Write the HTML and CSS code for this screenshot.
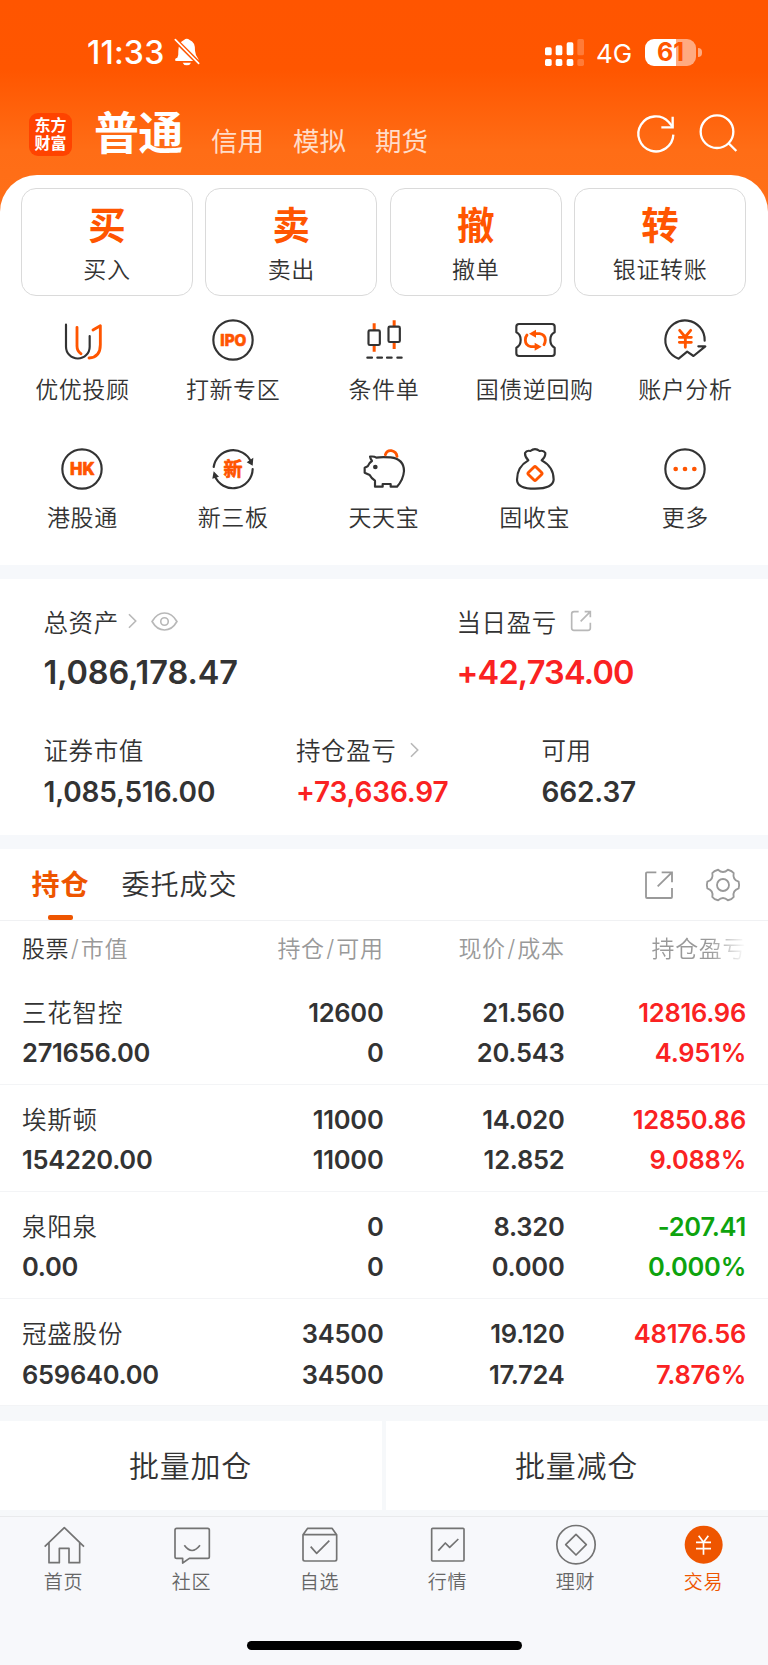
FILE: index.html
```html
<!DOCTYPE html>
<html lang="zh-CN">
<head>
<meta charset="utf-8">
<title>交易</title>
<link rel="stylesheet" href="styles.css">
</head>
<body>
<div class="app">
  <header class="top">
    <div class="status">
      <span class="time">11:33</span>
      <svg class="bell" viewBox="0 0 78 84"><path d="M10 59Q3 60 3 66Q3 69 8 69H71Q76 69 73 63Q64 52 63 38Q64 12 47 6Q38-1 30 6Q14 12 13 38Q14 50 10 59z" fill="#fff"/><path d="M26 74H51Q48 82 38.500 82Q29 82 26 74z" fill="#fff"/><path d="M0 2L78 80" stroke="#ff5600" stroke-width="14"/><path d="M4 5L74 76" stroke="#fff" stroke-width="5" stroke-linecap="round"/></svg>
      <svg class="signal" viewBox="0 0 117 81" fill="#fff"><rect y="25" width="20" height="24" rx="5"/><rect x="32" y="19" width="20" height="30" rx="5"/><rect x="65" y="10" width="20" height="39" rx="5"/><rect y="60" width="20" height="21" rx="5"/><rect x="32" y="60" width="20" height="21" rx="5"/><rect x="65" y="60" width="20" height="21" rx="5"/><g opacity=".22"><rect x="97" width="20" height="49" rx="5"/><rect x="97" y="60" width="20" height="21" rx="5"/></g></svg>
      <span class="net">4G</span>
      <span class="battery">61</span><i class="nub"></i>
    </div>
    <nav class="accounts">
      <div class="logo"><span>东方</span><span>财富</span></div>
      <strong class="current">普通</strong>
      <a>信用</a><a>模拟</a><a>期货</a>
      <svg class="refresh" viewBox="0 0 120 120" fill="none" stroke="#fff" stroke-width="7"><path d="M109 65A52.500 52.500 0 1 1 95 27L107 41"/><path d="M107 11V43H73"/></svg>
      <svg class="search" viewBox="0 0 120 120" fill="none" stroke="#fff" stroke-width="7"><circle cx="54" cy="56" r="49"/><path d="M88 90L112 114"/></svg>
    </nav>
  </header>

  <main>
    <section class="sheet">
      <div class="quick">
        <a class="card"><b>买</b><span>买入</span></a>
        <a class="card"><b>卖</b><span>卖出</span></a>
        <a class="card"><b>撤</b><span>撤单</span></a>
        <a class="card"><b>转</b><span>银证转账</span></a>
      </div>
      <div class="tools">
        <a class="tool"><svg viewBox="0 0 132 132"><path d="M18 20V86a35.500 35.500 0 0 0 71 0V54"/><path class="o" d="M51 28V84Q51 100 63 107M99 36L121 23V80Q121 118 87 120"/></svg><span>优优投顾</span></a>
        <a class="tool"><svg viewBox="0 0 132 132"><circle cx="66" cy="66" r="59"/><text x="67" y="84" font-size="49" textLength="78" lengthAdjust="spacingAndGlyphs">IPO</text></svg><span>打新专区</span></a>
        <a class="tool"><svg viewBox="0 0 132 132"><path class="o butt" d="M36.500 16V36M36.500 82V101M96.500 7V25M96.500 73V93"/><rect x="19.500" y="37" width="34" height="44" rx="4"/><rect x="79.500" y="26" width="34" height="46" rx="4"/><path d="M16 119H30M46 119H60M75 119H89M106 119H119"/></svg><span>条件单</span></a>
        <a class="tool"><svg viewBox="0 0 132 132"><path d="M18 18H117q8 0 8 8v17q-13 6-13 23t13 23v17q0 8-8 8H18q-8 0-8-8V89q13-6 13-23t-13-23V26q0-8 8-8z"/><path class="o" d="M62 47H80Q97 50 97 66Q97 74 93 80M73 86H54Q37 83 37 66Q37 57 42 51"/><path class="fo" d="M48 47L69 35V59zM86 86L65 74V98z"/></svg><span>国债逆回购</span></a>
        <a class="tool"><svg viewBox="0 0 132 132"><path d="M125 68A59 59 0 1 0 47 122L72.500 101L91.500 114L127 85H106"/><path class="o" d="M50 37L66.500 57L83 37M49 58H85M49 73H85M67 58V88"/></svg><span>账户分析</span></a>
        <a class="tool"><svg viewBox="0 0 132 132"><circle cx="66" cy="66" r="59"/><text x="67" y="84" font-size="50" textLength="74" lengthAdjust="spacingAndGlyphs">HK</text></svg><span>港股通</span></a>
        <a class="tool"><svg viewBox="0 0 132 132"><path d="M8 60A59 59 0 0 1 120 44M125 66A59 59 0 0 1 11 86"/><path class="fd" d="M107 46L127 32L125 56zM4 95L8 73L24 89z"/><text class="cn" x="66" y="86" font-size="57">新</text></svg><span>新三板</span></a>
        <a class="tool"><svg viewBox="0 0 132 132"><path d="M24 29Q36 27 43 32Q55 29 86 31Q126 36 126 72Q124 98 105 119H86V111H62V119H39V101Q28 94 23 84L8 77V62L17 58Q21 47 30 42Q25 35 24 29z"/><circle class="fd" cx="40" cy="60" r="7"/><path class="o" d="M70 23Q75 9 88 11Q103 14 105 28"/></svg><span>天天宝</span></a>
        <a class="tool"><svg viewBox="0 0 132 132"><path d="M46 40Q35 29 36 18Q41 9 52 12Q66 1 80 12Q92 9 97 18Q98 29 86 40Q122 59 122 98Q120 125 66 125Q12 125 12 98Q12 59 46 40z"/><rect class="o" x="50" y="63.500" width="32" height="32" rx="4" transform="rotate(45 66 79.500)"/></svg><span>固收宝</span></a>
        <a class="tool"><svg viewBox="0 0 132 132"><circle cx="66" cy="66" r="59"/><g class="fo"><circle cx="38" cy="66" r="7"/><circle cx="66" cy="66" r="7"/><circle cx="94" cy="66" r="7"/></g></svg><span>更多</span></a>
      </div>
    </section>

    <section class="assets">
      <div class="row main-row">
        <div class="item"><h3>总资产<svg class="chev" viewBox="0 0 28 48"><path d="M3 3L24 24L3 45"/></svg><svg class="eye" viewBox="0 0 82 58"><path d="M3 29Q18 3 41 3T79 29Q64 55 41 55T3 29z"/><circle cx="41" cy="29" r="11.500"/></svg></h3><p>1,086,178.47</p></div>
        <div class="item"><h3>当日盈亏<svg class="share-s" viewBox="0 0 66 66"><path d="M26 5H12Q5 5 5 12V54Q5 61 12 61H54Q61 61 61 54V38M32 34L61 5M44 5H61V22"/></svg></h3><p class="up">+42,734.00</p></div>
      </div>
      <div class="row sub-row">
        <div class="item"><h3>证券市值</h3><p>1,085,516.00</p></div>
        <div class="item"><h3>持仓盈亏<svg class="chev far" viewBox="0 0 28 48"><path d="M3 3L24 24L3 45"/></svg></h3><p class="up">+73,636.97</p></div>
        <div class="item"><h3>可用</h3><p>662.37</p></div>
      </div>
    </section>

    <section class="holdings">
      <div class="tabs">
        <a class="tab on">持仓</a><a class="tab">委托成交</a>
        <svg class="act first" viewBox="0 0 96 96"><path d="M40 10H12Q9 10 9 13V84Q9 87 12 87H84Q87 87 87 84V57M44 52L86 11M56 10H87V40"/></svg>
        <svg class="act" viewBox="-51 -51 102 102"><path d="M47-10Q50 0 47 10Q28 16 32 35.700Q27 43 14.800 45.700Q0 32-14.800 45.700Q-27 43-32 35.700Q-28 16-47 10Q-50 0-47-10Q-28-16-32-35.700Q-27-43-14.800-45.700Q0-32 14.800-45.700Q27-43 32-35.700Q28-16 47-10z"/><circle r="18"/></svg>
      </div>
      <div class="grid thead"><span><em>股票</em><i>/</i>市值</span><span>持仓<i>/</i>可用</span><span>现价<i>/</i>成本</span><span class="fade">持仓盈亏</span></div>
      <div class="grid stock"><span class="name">三花智控</span><b>12600</b><b>21.560</b><b class="up">12816.96</b><b>271656.00</b><b>0</b><b>20.543</b><b class="up">4.951%</b></div>
      <div class="grid stock"><span class="name">埃斯顿</span><b>11000</b><b>14.020</b><b class="up">12850.86</b><b>154220.00</b><b>11000</b><b>12.852</b><b class="up">9.088%</b></div>
      <div class="grid stock"><span class="name">泉阳泉</span><b>0</b><b>8.320</b><b class="down">-207.41</b><b>0.00</b><b>0</b><b>0.000</b><b class="down">0.000%</b></div>
      <div class="grid stock"><span class="name">冠盛股份</span><b>34500</b><b>19.120</b><b class="up">48176.56</b><b>659640.00</b><b>34500</b><b>17.724</b><b class="up">7.876%</b></div>
    </section>

    <div class="batch"><button>批量加仓</button><button>批量减仓</button></div>
  </main>

  <footer class="bottom">
    <nav class="bar">
      <a><svg viewBox="0 0 132 132"><path d="M8 71L67 14L126 71M21 60V119H52V76H81V119H113V60"/></svg><span>首页</span></a>
      <a><svg viewBox="0 0 132 132"><path d="M20 16H113Q118 16 118 21V101Q118 106 113 106H58L38 120V106H20Q15 106 15 101V21Q15 16 20 16zM43 67Q66 98 90 67"/></svg><span>社区</span></a>
      <a><svg viewBox="0 0 132 132"><path d="M15 35L29 16H102L116 35V109Q116 114 111 114H20Q15 114 15 109zM15 35H116M38 71L56 91L94 53"/></svg><span>自选</span></a>
      <a><svg viewBox="0 0 132 132"><rect x="17" y="16" width="97" height="98" rx="3"/><path d="M37 83L58 60L71 73L97 48"/></svg><span>行情</span></a>
      <a><svg viewBox="0 0 132 132"><circle cx="66" cy="65" r="57.500"/><path d="M66 34L97 65L66 96L35 65z"/></svg><span>理财</span></a>
      <a class="on"><svg viewBox="0 0 132 132"><circle class="disc" cx="65" cy="65" r="57"/><path class="yen" d="M50 38L64.500 58L79 38M42 58H87M42 77H87M64.500 58V95"/></svg><span>交易</span></a>
    </nav>
    <div class="home"></div>
  </footer>
</div>
</body>
</html>
```
FILE: styles.css
```css
* { box-sizing: border-box; margin: 0; padding: 0; }
body {
  width: 768px;
  background: #fff;
  color: #333;
  font-family: Inter, "Noto Sans CJK SC", sans-serif;
  font-weight: 350;
}
svg { display: block; flex: none; overflow: visible; }
i, em { font-style: normal; }
.app {
  display: flex;
  flex-direction: column;
  height: 1665px;
  overflow: hidden;
  background: linear-gradient(#ff5500 0, #ff5600 70px, #ff6d16 150px, #ff7019 220px);
}
.up { color: #fa2222; }
.down { color: #0ea30e; }

/* Header */
.top { height: 175px; flex: none; color: #fff; }
.status { display: flex; align-items: center; height: 80px; padding: 26px 0 2px 87px; }
.time { width: 87px; font-size: 32px; font-weight: 500; letter-spacing: .2px; }
.bell { width: 26px; height: 28px; }
.signal { width: 39px; height: 27px; margin-left: 345px; }
.net { width: 61px; padding: 2px 0 0 12px; font-size: 26px; font-weight: 400; }
.battery {
  width: 51px; height: 27px; border-radius: 9px;
  background: linear-gradient(90deg, #fff 61%, #ffaa80 61%);
  color: #ff5600; font-size: 25px; font-weight: 700; line-height: 27px; text-align: center;
}
.nub { width: 4px; height: 9px; margin-left: 2px; border-radius: 0 5px 5px 0; background: #ffaa80; }
.accounts { display: flex; align-items: center; height: 95px; padding-left: 29px; padding-top: 13px; }
.logo {
  display: flex; flex-direction: column; justify-content: center; align-items: center;
  width: 43px; height: 43px; border-radius: 9px;
  background: #ff4300; font-size: 16px; line-height: 18px; font-weight: 700;
}
.current { width: 117px; margin: -1px 0 0 22px; font-size: 45px; line-height: 60px; font-weight: 600; letter-spacing: -.8px; }
.accounts a { width: 82px; margin-top: 13px; font-size: 26.500px; line-height: 36px; font-weight: 400; color: #ffddc9; }
.refresh { width: 40px; height: 40px; margin: -2px 0 0 180px; }
.search { width: 40px; height: 40px; margin: -2px 0 0 22px; }

/* Shortcuts */
main { flex: none; }
.sheet { height: 390px; padding-top: 13px; border-radius: 37px 37px 0 0; background: #fff; }
.quick { display: grid; grid-template-columns: repeat(4, 1fr); gap: 12.500px; padding: 0 22px 0 21px; }
.card {
  display: flex; flex-direction: column; align-items: center;
  height: 108px; border: 1px solid #dadada; border-radius: 15px;
}
.card b { height: 60px; padding-top: 8px; color: #ff5500; font-size: 37.500px; line-height: 58px; font-weight: 600; }
.card span, .tool span { font-size: 23px; line-height: 34px; letter-spacing: .6px; white-space: nowrap; }
.card span { margin-top: 4px; }
.tools { display: grid; grid-template-columns: repeat(5, 150.750px); grid-auto-rows: 128.500px; padding: 22px 7px 0; }
.tool { display: flex; flex-direction: column; align-items: center; gap: 10.500px; }
.tool svg { width: 44px; height: 44px; fill: none; stroke: #333; stroke-width: 6.500; stroke-linecap: round; stroke-linejoin: round; }
.tool .o { stroke: #ff5500; stroke-width: 8.500; }
.tool .butt { stroke-linecap: butt; stroke-width: 9; }
.tool .fo { fill: #ff5500; stroke: none; }
.tool .fd { fill: #333; stroke: none; }
.tool text { fill: #ff5500; stroke: #ff5500; stroke-width: 2; text-anchor: middle; font-weight: 800; }
.tool .cn { font-family: "Noto Sans CJK SC", sans-serif; font-weight: 700; }

/* Assets */
.assets { height: 284px; padding: 22px 0 0 43.500px; border-top: 14px solid #f6f8fb; border-bottom: 14px solid #f6f8fb; background: #fff; }
.row { display: grid; }
.main-row { grid-template-columns: 413px 1fr; height: 128.500px; }
.sub-row { grid-template-columns: 252.500px 245.500px 1fr; }
.item h3 { display: flex; align-items: center; height: 40px; font-size: 24.500px; font-weight: 350; letter-spacing: .6px; }
.item p { font-size: 32.500px; line-height: 42px; font-weight: 600; margin-top: 11px; letter-spacing: -.1px; }
.item p.up { letter-spacing: -.8px; }
.sub-row .item p { font-size: 28px; line-height: 40px; margin-top: 2px; letter-spacing: -.15px; }
.item svg { fill: none; stroke: #b8b8b8; stroke-width: 5; }
.chev { width: 9px; height: 16px; margin-left: 9px; }
.chev.far { margin-left: 14px; }
.eye { width: 27px; height: 19px; margin-left: 14px; }
.share-s { width: 22px; height: 22px; margin-left: 13px; }

/* Holdings */
.holdings { background: #fff; }
.tabs { display: flex; align-items: center; height: 72px; padding: 0 28px 0 31.500px; border-bottom: 1px solid #f0f1f3; }
.tab { position: relative; margin-right: 32px; padding-top: 2px; font-size: 28px; line-height: 69px; letter-spacing: 1px; }
.tab.on { color: #ee5500; font-weight: 700; }
.tab.on::after { content: ""; position: absolute; left: 16px; bottom: 0; width: 25px; height: 5px; border-radius: 2px; background: #ee5500; }
.act { width: 34px; height: 34px; fill: none; stroke: #999; stroke-width: 5.500; }
.act.first { width: 32px; height: 32px; margin-left: auto; margin-right: 31px; }
.grid { display: grid; grid-template-columns: 180px 181.500px 181px 181.500px; padding: 0 22px; text-align: right; }
.grid > :nth-child(4n+1) { text-align: left; }
.thead { height: 56.500px; color: #999; font-size: 23px; line-height: 57px; letter-spacing: .6px; white-space: nowrap; }
.thead em { color: #333; }
.thead i { padding: 0 1.500px; }
.fade { background: linear-gradient(90deg, #999 80%, #fff 100%); background-clip: text; color: transparent; }
.stock { height: 107.200px; padding-top: 15px; grid-auto-rows: 40.500px; border-bottom: 1px solid #f3f4f6; font-size: 25.500px; line-height: 40.500px; }
.stock b { font-weight: 600; letter-spacing: -.25px; }
.name { font-size: 24.500px; letter-spacing: .8px; }

.batch { display: grid; grid-template-columns: 1fr 1fr; gap: 4px; padding: 15px 0 6px; background: #f6f8fa; }
.batch button { height: 89px; padding: 0 1px 4px 0; border: 0; background: #fff; color: #333; font-family: inherit; font-size: 30px; font-weight: 350; letter-spacing: .7px; }

/* Bottom bar */
.bottom { flex: 1; border-top: 1px solid #e9eaec; background: #f7f8fb; }
.bar { display: grid; grid-template-columns: repeat(6, 1fr); height: 124px; padding-top: 6px; }
.bar a { display: flex; flex-direction: column; align-items: center; color: #666; }
.bar svg { width: 44px; height: 44px; fill: none; stroke: #737373; stroke-width: 5; stroke-linejoin: round; }
.bar span { margin: 2px 1px 0 0; font-size: 19px; line-height: 28px; letter-spacing: .8px; }
.bar .on { color: #ee5500; }
.bar .disc { fill: #ee5500; stroke: none; }
.bar .yen { stroke: #fff; stroke-width: 5; }
.home { width: 275px; height: 9px; margin: 0 auto; border-radius: 5px; background: #000; }
```
